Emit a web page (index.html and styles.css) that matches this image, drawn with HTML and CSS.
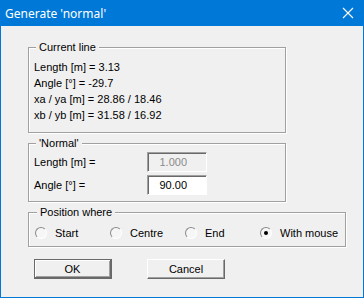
FILE: index.html
```html
<!DOCTYPE html>
<html lang="en">
<head>
    <meta charset="UTF-8">
    <title>Generate 'normal'</title>
    <link rel="stylesheet" href="styles.css">
</head>
<body>
    <div class="window">
        <div class="titlebar">
            <span class="title">Generate 'normal'</span>
            <svg class="close" width="12" height="12" viewBox="0 0 12 12">
                <path d="M1 1 L11 11 M11 1 L1 11" stroke="#ffffff" stroke-width="1.1" fill="none"/>
            </svg>
        </div>

        <div class="client">
            <fieldset class="group group-current">
                <legend>Current line</legend>
                <div class="line">Length [m] = 3.13</div>
                <div class="line">Angle [°] = -29.7</div>
                <div class="line">xa / ya [m] = 28.86 / 18.46</div>
                <div class="line">xb / yb [m] = 31.58 / 16.92</div>
            </fieldset>

            <fieldset class="group group-normal">
                <legend>'Normal'</legend>
                <div class="field">
                    <label>Length [m] =</label>
                    <input class="edit" type="text" value="1.000" disabled>
                </div>
                <div class="field">
                    <label>Angle [°] =</label>
                    <input class="edit" type="text" value="90.00">
                </div>
            </fieldset>

            <fieldset class="group group-position">
                <legend>Position where</legend>
                <div class="radios">
                    <div class="radio"><span class="radio-dot"></span>Start</div>
                    <div class="radio"><span class="radio-dot"></span>Centre</div>
                    <div class="radio"><span class="radio-dot"></span>End</div>
                    <div class="radio"><span class="radio-dot checked"></span>With mouse</div>
                </div>
            </fieldset>

            <div class="buttons">
                <button class="btn btn-default">OK</button>
                <button class="btn">Cancel</button>
            </div>
        </div>
    </div>
</body>
</html>
```

FILE: styles.css
```css
:root {
    --title-blue: #0078d7;
    --face: #f0f0f0;
    --etch: #a0a0a0;
    --shadow: #696969;
}
body {
    margin: 0;
    padding: 0;
    background-color: var(--face);
    font-family: 'Liberation Sans', Arial, sans-serif;
    font-size: 11px;
    color: #000000;
}
.window {
    width: 364px;
    height: 298px;
    display: flex;
    flex-direction: column;
}
.titlebar {
    height: 26px;
    background-color: var(--title-blue);
    display: flex;
    align-items: center;
    justify-content: space-between;
    padding: 0 10px 0 5px;
    flex-shrink: 0;
}
.title {
    color: #ffffff;
    font-family: 'Noto Sans', 'Open Sans', sans-serif;
    font-size: 12px;
}
.close {
    display: block;
}
.client {
    flex-grow: 1;
    border: 1px solid var(--title-blue);
    border-top: none;
    padding: 14px 0 0 27px;
}
.group {
    box-sizing: border-box;
    width: 258px;
    margin: 0;
    border: 1px solid var(--etch);
    box-shadow: inset 1px 1px 0 #ffffff, 1px 1px 0 #ffffff;
    padding: 5px 5px 9px;
    min-inline-size: 0;
}
.group legend {
    line-height: 14px;
    padding: 0 3px;
    margin-left: 2px;
    background-color: var(--face);
}
.line {
    line-height: 16px;
}
.group-normal {
    margin-top: 3px;
    padding: 2px 5px 6px;
}
.field {
    display: grid;
    grid-template-columns: 113px 60px;
    align-items: center;
    height: 20px;
}
.field + .field {
    margin-top: 3px;
}
.edit {
    box-sizing: border-box;
    width: 60px;
    height: 20px;
    margin: 0;
    font: inherit;
    text-align: right;
    padding: 0 19px 0 0;
    background-color: #ffffff;
    color: #000000;
    border: 1px solid;
    border-color: var(--etch) #ffffff #ffffff var(--etch);
    box-shadow: inset 1px 1px 0 var(--shadow);
    outline: none;
}
.edit:disabled {
    background-color: var(--face);
    color: #8a8a8a;
}
.group-position {
    width: 318px;
    margin-top: 3px;
    padding: 7px 6px 6px;
}
.radios {
    display: grid;
    grid-template-columns: repeat(3, 75px) auto;
    height: 14px;
    align-items: center;
}
.radio {
    display: flex;
    align-items: center;
    gap: 8px;
    white-space: nowrap;
}
.radio-dot {
    box-sizing: border-box;
    width: 12px;
    height: 12px;
    border-radius: 50%;
    border: 1px solid;
    border-color: #8a8a8a #ffffff #ffffff #8a8a8a;
    background-color: #f6f6f6;
    display: flex;
    align-items: center;
    justify-content: center;
}
.radio-dot.checked::after {
    content: "";
    width: 4px;
    height: 4px;
    border-radius: 50%;
    background-color: #000000;
}
.buttons {
    display: flex;
    gap: 35px;
    margin: 12px 0 0 6px;
}
.btn {
    box-sizing: border-box;
    width: 78px;
    height: 20px;
    margin: 0;
    padding: 0;
    font-family: 'Liberation Sans', Arial, sans-serif;
    font-size: 11px;
    color: #000000;
    background-color: var(--face);
    border: 1px solid;
    border-color: #ffffff var(--shadow) var(--shadow) #ffffff;
    box-shadow: inset -1px -1px 0 var(--etch);
}
.btn-default {
    border-color: var(--shadow);
    box-shadow: inset 1px 1px 0 #ffffff, inset -1px -1px 0 var(--etch);
    border-right-width: 2px;
    border-bottom-width: 2px;
}
```
